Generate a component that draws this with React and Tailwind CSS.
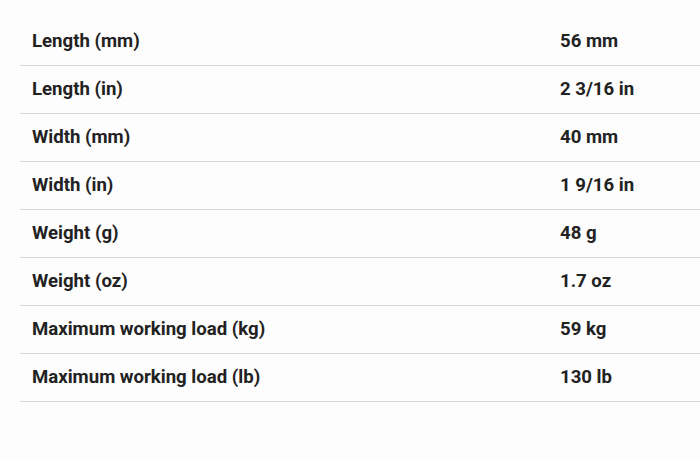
const specs = [
  ["Length (mm)", "56 mm"],
  ["Length (in)", "2 3/16 in"],
  ["Width (mm)", "40 mm"],
  ["Width (in)", "1 9/16 in"],
  ["Weight (g)", "48 g"],
  ["Weight (oz)", "1.7 oz"],
  ["Maximum working load (kg)", "59 kg"],
  ["Maximum working load (lb)", "130 lb"],
];

export default function App() {
  return (
    <div className="min-h-[458px] w-[700px] overflow-hidden bg-[#fdfdfd] pt-[17px] pl-5 font-['Roboto',sans-serif] text-[#222]">
      <table className="w-[700px] border-collapse">
        <tbody>
          {specs.map(([label, value]) => (
            <tr key={label} className="h-[48px] border-b-[1.5px] border-[#d6d6d6]">
              <td className="w-[540px] px-3 pt-[2px] text-[18.6px] font-bold">{label}</td>
              <td className="px-0 pt-[2px] text-[18.6px] font-bold">{value}</td>
            </tr>
          ))}
        </tbody>
      </table>
    </div>
  );
}
